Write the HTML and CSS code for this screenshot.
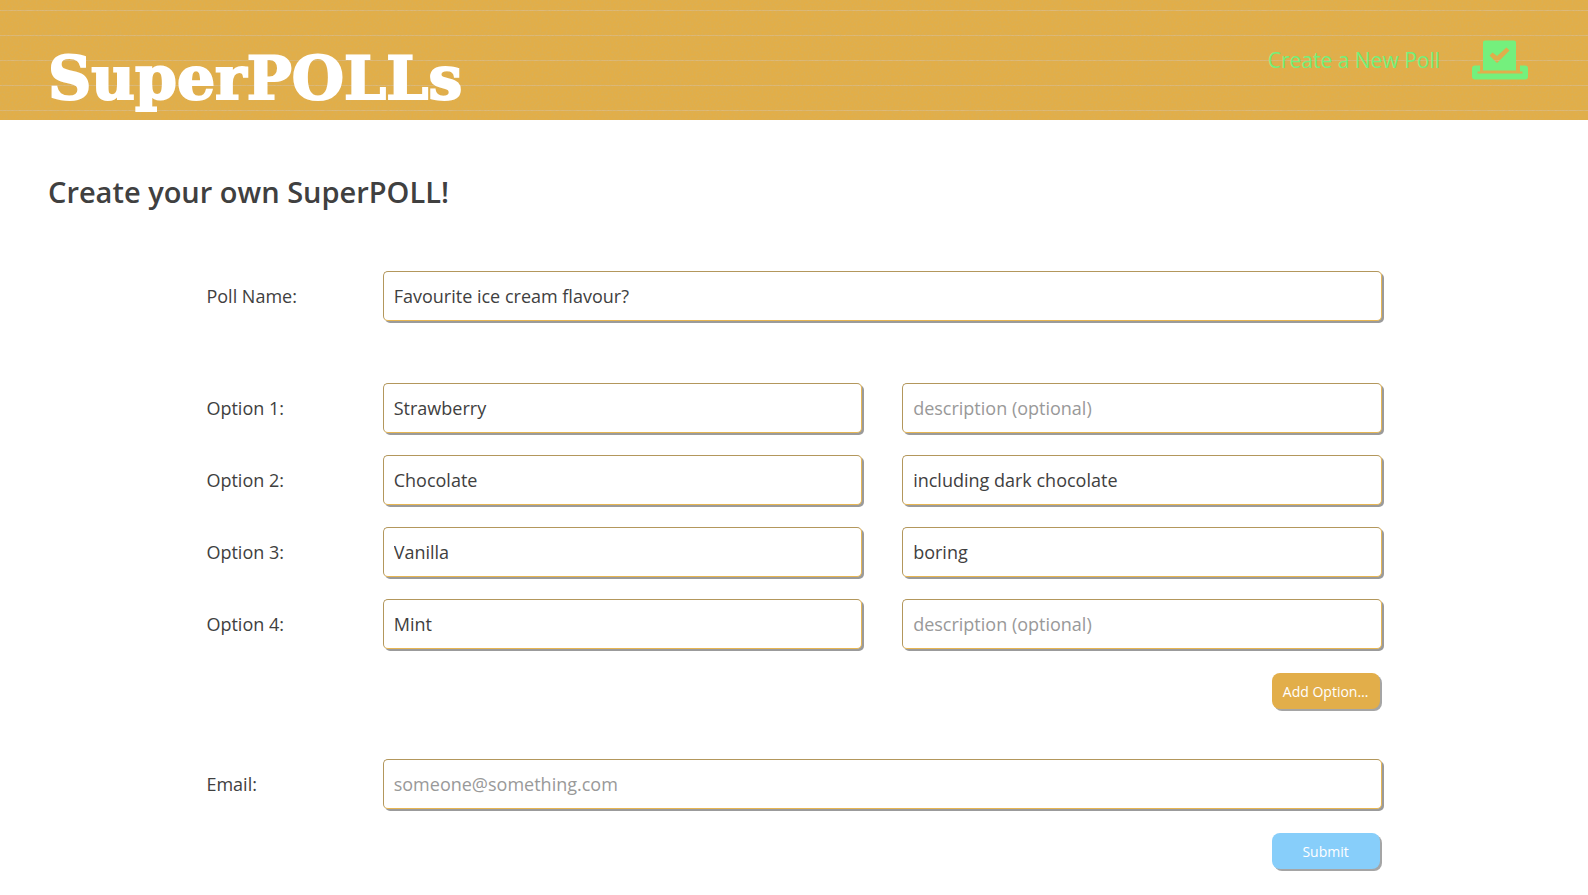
FILE: index.html
```html
<!DOCTYPE html>
<html lang="en">
<head>
<meta charset="utf-8">
<meta name="viewport" content="width=device-width, initial-scale=1">
<title>SuperPOLLs</title>
<link rel="stylesheet" href="styles.css">
</head>
<body>
<header class="header">
  <svg class="grain" width="100%" height="100%" aria-hidden="true">
    <filter id="grain" x="0" y="0" width="100%" height="100%" color-interpolation-filters="sRGB">
      <feTurbulence type="fractalNoise" baseFrequency="0.5" numOctaves="3" seed="4"/>
      <feColorMatrix values="0 0 0 0 0.83  0 0 0 0 0.69  0 0 0 0 0.38  1 0 0 0 -0.3"/>
    </filter>
    <rect width="100%" height="100%" filter="url(#grain)"/>
  </svg>
  <a class="logo" href="#">SuperPOLLs</a>
  <a class="create" href="#">
    <span>Create a New Poll</span>
    <svg class="ballot" viewBox="0 0 56 39" aria-hidden="true">
      <path fill-rule="evenodd" d="M13 0H42Q44 0 44 2V30H11V2Q11 0 13 0ZM17.500 15L25 22.500L37.500 10L34.500 7L25 15.500L20.500 12Z"/>
      <path d="M3 25H8V31H5.500V33H50.500V31H48V25H53Q56 25 56 28V36Q56 39 53 39H3Q0 39 0 36V28Q0 25 3 25Z"/>
    </svg>
  </a>
</header>
<main class="main">
  <h1 class="title">Create your own SuperPOLL!</h1>
  <form class="form">
    <div class="row">
      <label for="name">Poll Name:</label>
      <input class="field" id="name" type="text" value="Favourite ice cream flavour?">
    </div>
    <div class="options">
      <div class="row">
        <label for="o1">Option 1:</label>
        <input class="field" id="o1" type="text" value="Strawberry">
        <input class="field" type="text" placeholder="description (optional)" aria-label="Option 1 description">
      </div>
      <div class="row">
        <label for="o2">Option 2:</label>
        <input class="field" id="o2" type="text" value="Chocolate">
        <input class="field" type="text" value="including dark chocolate" aria-label="Option 2 description">
      </div>
      <div class="row">
        <label for="o3">Option 3:</label>
        <input class="field" id="o3" type="text" value="Vanilla">
        <input class="field" type="text" value="boring" aria-label="Option 3 description">
      </div>
      <div class="row">
        <label for="o4">Option 4:</label>
        <input class="field" id="o4" type="text" value="Mint">
        <input class="field" type="text" placeholder="description (optional)" aria-label="Option 4 description">
      </div>
      <button class="button" type="button">Add Option…</button>
    </div>
    <div class="row">
      <label for="email">Email:</label>
      <input class="field" id="email" type="email" placeholder="someone@something.com">
    </div>
    <button class="button submit" type="submit">Submit</button>
  </form>
</main>
</body>
</html>
```
FILE: styles.css
```css
* {
  box-sizing: border-box;
}

body {
  margin: 0;
  background: #fff;
  color: #404040;
  font-family: "Open Sans", sans-serif;
  font-size: 18px;
}

.header {
  position: relative;
  display: flex;
  justify-content: space-between;
  align-items: flex-start;
  min-height: 120px;
  padding: 40px 60px 0 48px;
  background: repeating-linear-gradient(#dcb97c 0 1px, #e3ae46 1px 25px) 0 10px;
}

.grain {
  position: absolute;
  inset: 0;
}

.logo,
.create {
  position: relative;
  text-decoration: none;
}

.logo {
  margin-top: 6px;
  color: #fff;
  font: bold 60px/64px "DejaVu Serif", serif;
  -webkit-text-stroke: 2px #fff;
}

.create {
  display: flex;
  align-items: center;
  gap: 32px;
  color: #74ef7b;
  font-size: 21px;
  line-height: 40px;
}

.ballot {
  width: 56px;
  height: 40px;
  fill: #74f07d;
}

.main {
  padding: 48px 0 24px;
}

.title {
  margin: 0 48px 55px;
  font-size: 29px;
  font-weight: 600;
  line-height: 48px;
}

.form {
  display: flex;
  flex-direction: column;
  margin: 0 13%;
}

.row {
  display: flex;
  align-items: center;
  gap: 40px;
}

.row label {
  flex: none;
  width: 15%;
  margin-right: -40px;
}

.field {
  flex: 1;
  min-width: 0;
  height: 50px;
  padding: 0 10px;
  border: 1px solid;
  border-color: #b3975c #e6b552 #e6b552 #b3975c;
  border-radius: 5px;
  background: #fff;
  box-shadow: 2px 2px #9b9b9b;
  color: inherit;
  font: inherit;
}

.field::placeholder {
  color: #999;
  opacity: 1;
}

.options {
  display: flex;
  flex-direction: column;
  gap: 22px;
  margin: 62px 0 50px;
}

.button {
  align-self: flex-end;
  width: 108px;
  height: 36px;
  margin: 2px 2px 0 0;
  padding: 0;
  border: 0;
  border-radius: 8px;
  background: #e2ae4a;
  box-shadow: 2px 2px #a5a5a5;
  color: #fff;
  font-family: inherit;
  font-size: 14px;
}

.submit {
  margin-top: 24px;
  background: #87cefa;
}
```
